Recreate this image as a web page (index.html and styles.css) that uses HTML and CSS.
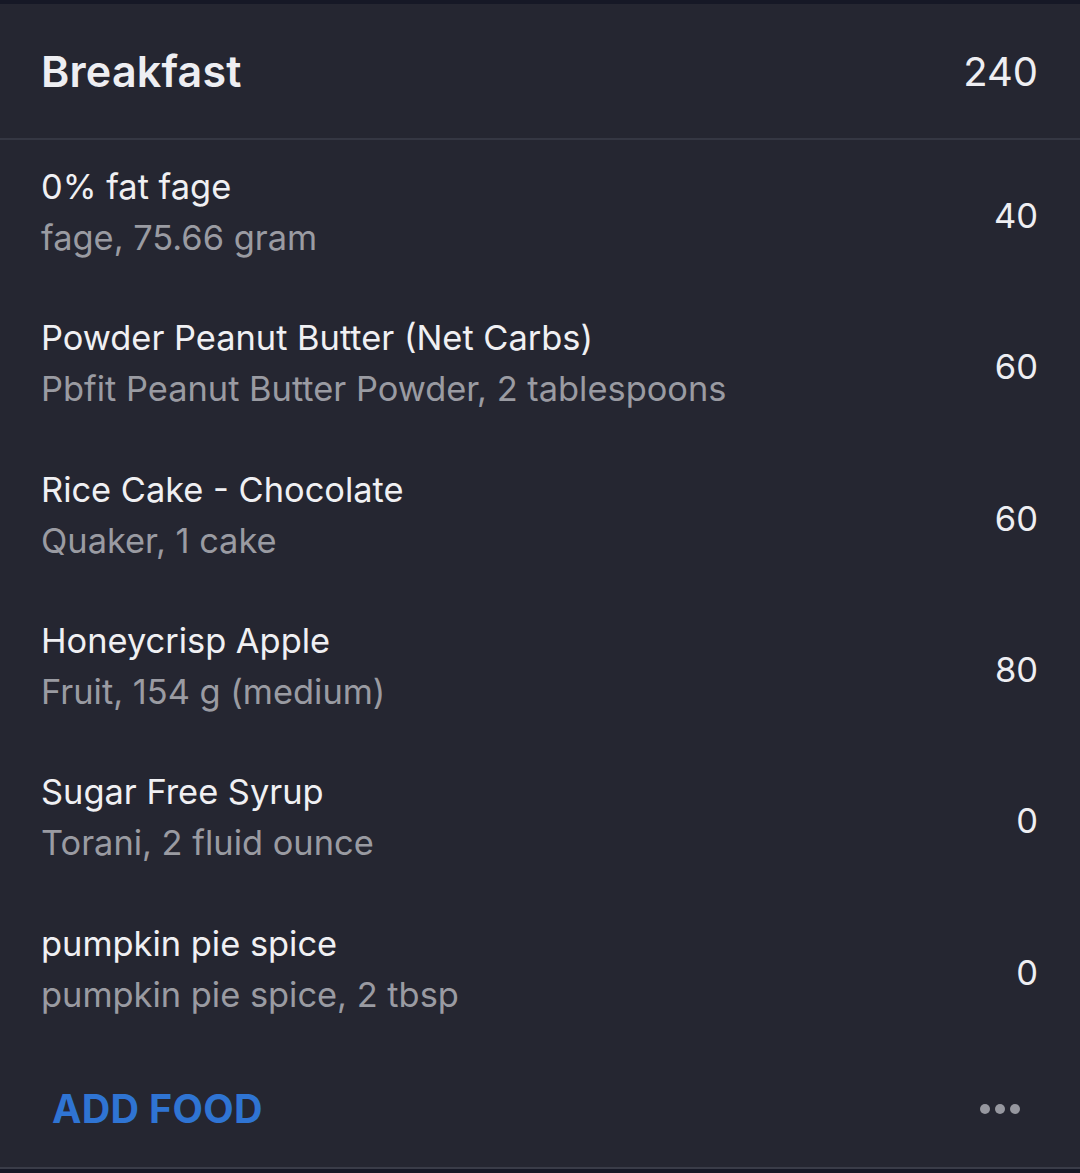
FILE: index.html
```html
<!DOCTYPE html>
<html>
<head>
<meta charset="utf-8">
<link rel="stylesheet" href="styles.css">
</head>
<body>
<div class="topbar"></div>
<section class="meal">
  <header class="meal-head">
    <h1 class="meal-title">Breakfast</h1>
    <span class="meal-total">240</span>
  </header>
  <ul class="items">
    <li class="item"><div class="item-text"><div class="item-name">0% fat fage</div><div class="item-desc">fage, 75.66 gram</div></div><span class="item-cal">40</span></li>
    <li class="item"><div class="item-text"><div class="item-name">Powder Peanut Butter (Net Carbs)</div><div class="item-desc">Pbfit Peanut Butter Powder, 2 tablespoons</div></div><span class="item-cal">60</span></li>
    <li class="item"><div class="item-text"><div class="item-name">Rice Cake - Chocolate</div><div class="item-desc">Quaker, 1 cake</div></div><span class="item-cal">60</span></li>
    <li class="item"><div class="item-text"><div class="item-name">Honeycrisp Apple</div><div class="item-desc">Fruit, 154 g (medium)</div></div><span class="item-cal">80</span></li>
    <li class="item"><div class="item-text"><div class="item-name">Sugar Free Syrup</div><div class="item-desc">Torani, 2 fluid ounce</div></div><span class="item-cal">0</span></li>
    <li class="item"><div class="item-text"><div class="item-name">pumpkin pie spice</div><div class="item-desc">pumpkin pie spice, 2 tbsp</div></div><span class="item-cal">0</span></li>
  </ul>
  <footer class="meal-foot">
    <span class="add-food">ADD FOOD</span>
    <span class="more"><i></i><i></i><i></i></span>
  </footer>
</section>
<div class="bottombar"></div>
</body>
</html>
```
FILE: styles.css
```css
html, body {
  margin: 0;
  padding: 0;
  background: #252631;
  font-family: Inter, "Noto Sans", "Liberation Sans", sans-serif;
  color: #f0f0f3;
}
.topbar {
  height: 4px;
  background: #161826;
}
.meal-head {
  height: 136px;
  display: flex;
  align-items: center;
  justify-content: space-between;
  padding: 0 42px 0 41px;
  border-bottom: 2px solid #353743;
  box-sizing: border-box;
}
.meal-title {
  margin: 0;
  font-size: 43px;
  font-weight: 600;
  letter-spacing: 0.2px;
  color: #eeeef2;
}
.meal-total {
  font-size: 40px;
  font-weight: 400;
  color: #eeeef2;
}
.items {
  list-style: none;
  margin: 0;
  padding: 0;
}
.item {
  height: 151.3px;
  display: flex;
  align-items: center;
  justify-content: space-between;
  padding: 0 42px 0 41px;
  box-sizing: border-box;
}
.item-text {
  display: flex;
  flex-direction: column;
  gap: 7px;
  margin-top: -6px;
}
.item-name {
  font-size: 34.4px;
  line-height: 44px;
  color: #f0f0f3;
}
.item-desc {
  font-size: 34.4px;
  line-height: 44px;
  color: #9a9ba2;
}
.item-cal {
  font-size: 34.5px;
  color: #eeeef2;
  margin-top: 0;
}
.meal-foot {
  height: 119px;
  display: flex;
  align-items: center;
  justify-content: space-between;
  padding: 4px 60px 0 52px;
  box-sizing: border-box;
}
.add-food {
  font-size: 39.5px;
  font-weight: 700;
  color: #2f74d3;
  letter-spacing: 0.3px;
}
.more {
  display: flex;
  gap: 5px;
}
.more i {
  width: 10px;
  height: 10px;
  border-radius: 50%;
  background: #96979f;
}
.bottombar {
  border-top: 2px solid #3a3c48;
  height: 10px;
  background: #161826;
}
```
